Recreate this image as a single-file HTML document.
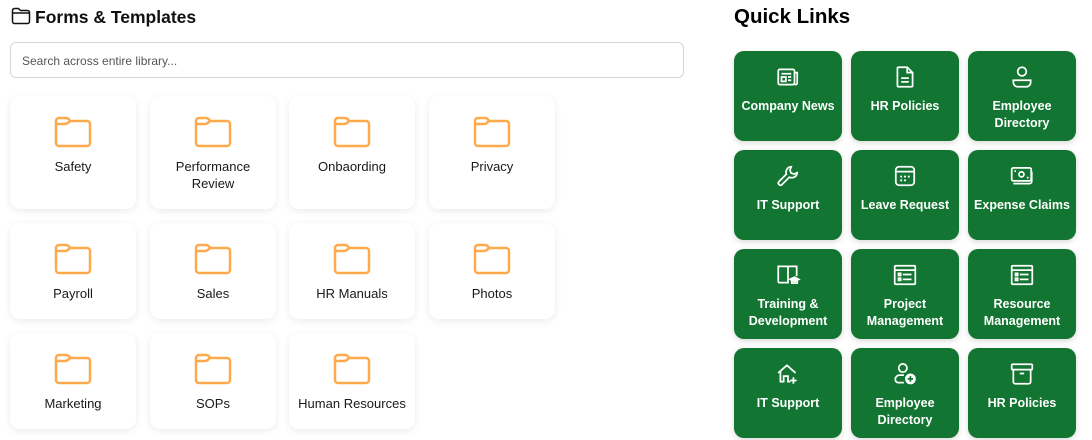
<!DOCTYPE html>
<html><head><style>
*{box-sizing:border-box;margin:0;padding:0}
body{width:1092px;height:440px;background:#fff;font-family:"Liberation Sans",sans-serif;position:relative;overflow:hidden;color:#111}
.t1{position:absolute;left:35px;top:7px;font-size:17.5px;font-weight:bold;color:#111}
.t2{position:absolute;left:734px;top:5px;font-size:20.5px;font-weight:bold;color:#000}
.search{position:absolute;left:10px;top:42px;width:674px;height:36px;border:1px solid #d6d6d6;border-radius:6px;font-size:12px;color:#555;padding:11px 11px}
.card{position:absolute;width:126px;background:#fff;border-radius:10px;box-shadow:0 2px 8px rgba(0,0,0,.08);text-align:center;font-size:13px;color:#1a1a1a;line-height:17px}
.card svg{position:absolute;left:44px;top:20px}
.card .l{position:absolute;left:0;right:0;top:62px}
.q{position:absolute;width:108px;height:90px;background:#127531;border-radius:10px;box-shadow:0 2px 6px rgba(0,0,0,.15);color:#fff;font-weight:bold;font-size:12.5px;text-align:center;line-height:17px}
.q svg{position:absolute;left:41px;top:13px}
.q .l{position:absolute;left:0;right:0;top:47px}
</style></head><body>
<svg style="position:absolute;left:11px;top:7px" width="20" height="18" viewBox="0 0 20 18"><path d="M1.5 3.5a2 2 0 0 1 2-2h4l2 2h7a2 2 0 0 1 2 2v9a2 2 0 0 1-2 2h-13a2 2 0 0 1-2-2z M1.5 6h17" fill="none" stroke="#111" stroke-width="1.5"/></svg>
<div class="t1">Forms &amp; Templates</div>
<div class="t2">Quick Links</div>
<div class="search">Search across entire library...</div>

<div class="card" style="left:10px;top:96px;height:113px"><svg width="38" height="32" viewBox="0 0 38 32"><path d="M2 5a3 3 0 0 1 3-3h7c2 0 3 1 4 3h17a3 3 0 0 1 3 3v19a3 3 0 0 1-3 3H5a3 3 0 0 1-3-3z M2 8h9c2 0 3-1 5-3" fill="none" stroke="#ffa94d" stroke-width="2.5"/></svg><div class="l">Safety</div></div>
<div class="card" style="left:150px;top:96px;height:113px"><svg width="38" height="32" viewBox="0 0 38 32"><path d="M2 5a3 3 0 0 1 3-3h7c2 0 3 1 4 3h17a3 3 0 0 1 3 3v19a3 3 0 0 1-3 3H5a3 3 0 0 1-3-3z M2 8h9c2 0 3-1 5-3" fill="none" stroke="#ffa94d" stroke-width="2.5"/></svg><div class="l">Performance<br>Review</div></div>
<div class="card" style="left:289px;top:96px;height:113px"><svg width="38" height="32" viewBox="0 0 38 32"><path d="M2 5a3 3 0 0 1 3-3h7c2 0 3 1 4 3h17a3 3 0 0 1 3 3v19a3 3 0 0 1-3 3H5a3 3 0 0 1-3-3z M2 8h9c2 0 3-1 5-3" fill="none" stroke="#ffa94d" stroke-width="2.5"/></svg><div class="l">Onbaording</div></div>
<div class="card" style="left:429px;top:96px;height:113px"><svg width="38" height="32" viewBox="0 0 38 32"><path d="M2 5a3 3 0 0 1 3-3h7c2 0 3 1 4 3h17a3 3 0 0 1 3 3v19a3 3 0 0 1-3 3H5a3 3 0 0 1-3-3z M2 8h9c2 0 3-1 5-3" fill="none" stroke="#ffa94d" stroke-width="2.5"/></svg><div class="l">Privacy</div></div>

<div class="card" style="left:10px;top:223px;height:96px"><svg width="38" height="32" viewBox="0 0 38 32"><path d="M2 5a3 3 0 0 1 3-3h7c2 0 3 1 4 3h17a3 3 0 0 1 3 3v19a3 3 0 0 1-3 3H5a3 3 0 0 1-3-3z M2 8h9c2 0 3-1 5-3" fill="none" stroke="#ffa94d" stroke-width="2.5"/></svg><div class="l">Payroll</div></div>
<div class="card" style="left:150px;top:223px;height:96px"><svg width="38" height="32" viewBox="0 0 38 32"><path d="M2 5a3 3 0 0 1 3-3h7c2 0 3 1 4 3h17a3 3 0 0 1 3 3v19a3 3 0 0 1-3 3H5a3 3 0 0 1-3-3z M2 8h9c2 0 3-1 5-3" fill="none" stroke="#ffa94d" stroke-width="2.5"/></svg><div class="l">Sales</div></div>
<div class="card" style="left:289px;top:223px;height:96px"><svg width="38" height="32" viewBox="0 0 38 32"><path d="M2 5a3 3 0 0 1 3-3h7c2 0 3 1 4 3h17a3 3 0 0 1 3 3v19a3 3 0 0 1-3 3H5a3 3 0 0 1-3-3z M2 8h9c2 0 3-1 5-3" fill="none" stroke="#ffa94d" stroke-width="2.5"/></svg><div class="l">HR Manuals</div></div>
<div class="card" style="left:429px;top:223px;height:96px"><svg width="38" height="32" viewBox="0 0 38 32"><path d="M2 5a3 3 0 0 1 3-3h7c2 0 3 1 4 3h17a3 3 0 0 1 3 3v19a3 3 0 0 1-3 3H5a3 3 0 0 1-3-3z M2 8h9c2 0 3-1 5-3" fill="none" stroke="#ffa94d" stroke-width="2.5"/></svg><div class="l">Photos</div></div>

<div class="card" style="left:10px;top:333px;height:96px"><svg width="38" height="32" viewBox="0 0 38 32"><path d="M2 5a3 3 0 0 1 3-3h7c2 0 3 1 4 3h17a3 3 0 0 1 3 3v19a3 3 0 0 1-3 3H5a3 3 0 0 1-3-3z M2 8h9c2 0 3-1 5-3" fill="none" stroke="#ffa94d" stroke-width="2.5"/></svg><div class="l">Marketing</div></div>
<div class="card" style="left:150px;top:333px;height:96px"><svg width="38" height="32" viewBox="0 0 38 32"><path d="M2 5a3 3 0 0 1 3-3h7c2 0 3 1 4 3h17a3 3 0 0 1 3 3v19a3 3 0 0 1-3 3H5a3 3 0 0 1-3-3z M2 8h9c2 0 3-1 5-3" fill="none" stroke="#ffa94d" stroke-width="2.5"/></svg><div class="l">SOPs</div></div>
<div class="card" style="left:289px;top:333px;height:96px"><svg width="38" height="32" viewBox="0 0 38 32"><path d="M2 5a3 3 0 0 1 3-3h7c2 0 3 1 4 3h17a3 3 0 0 1 3 3v19a3 3 0 0 1-3 3H5a3 3 0 0 1-3-3z M2 8h9c2 0 3-1 5-3" fill="none" stroke="#ffa94d" stroke-width="2.5"/></svg><div class="l">Human Resources</div></div>

<div class="q" style="left:734px;top:51px"><svg width="26" height="26" viewBox="0 0 24 24" fill="none" stroke="#fff" stroke-width="1.6"><rect x="3" y="5" width="15" height="14" rx="1.5"/><path d="M18 8h2.5v9.5a1.5 1.5 0 0 1-3 0M6 9h9M6 12h4v4H6zM12 12h3M12 15h3"/></svg><div class="l">Company News</div></div>
<div class="q" style="left:851px;top:51px"><svg width="26" height="26" viewBox="0 0 24 24" fill="none" stroke="#fff" stroke-width="1.6"><path d="M6 3h8l5 5v12a1 1 0 0 1-1 1H6a1 1 0 0 1-1-1V4a1 1 0 0 1 1-1zM14 3v5h5M8.5 13h7M8.5 16.5h7"/></svg><div class="l">HR Policies</div></div>
<div class="q" style="left:968px;top:51px"><svg width="26" height="26" viewBox="0 0 24 24" fill="none" stroke="#fff" stroke-width="1.6"><circle cx="12" cy="7" r="4"/><path d="M4 15h16v2a4 4 0 0 1-4 4H8a4 4 0 0 1-4-4z"/></svg><div class="l">Employee<br>Directory</div></div>

<div class="q" style="left:734px;top:150px"><svg width="26" height="26" viewBox="0 0 24 24" fill="none" stroke="#fff" stroke-width="1.6"><path d="M15 3.5a5 5 0 0 0-4.5 6.8L3.5 17.3a2 2 0 0 0 2.8 2.8l7-7A5 5 0 0 0 20.5 9l-3 1.2-2.7-1 -1-2.7L15 3.5z"/></svg><div class="l">IT Support</div></div>
<div class="q" style="left:851px;top:150px"><svg width="26" height="26" viewBox="0 0 24 24" fill="none" stroke="#fff" stroke-width="1.6"><rect x="3.5" y="3.5" width="17" height="17" rx="3"/><path d="M3.5 8h17"/><g fill="#fff" stroke="none"><circle cx="8.5" cy="12.5" r="1"/><circle cx="12" cy="12.5" r="1"/><circle cx="15.5" cy="12.5" r="1"/><circle cx="8.5" cy="16" r="1"/><circle cx="12" cy="16" r="1"/></g></svg><div class="l">Leave Request</div></div>
<div class="q" style="left:968px;top:150px"><svg width="26" height="26" viewBox="0 0 24 24" fill="none" stroke="#fff" stroke-width="1.6"><rect x="2.5" y="4.5" width="18" height="12" rx="1.5"/><circle cx="11.5" cy="10.5" r="2.3"/><path d="M5 7.5h1.5M16.5 13.5H18M4 19h15a2 2 0 0 0 2-2V8"/></svg><div class="l">Expense Claims</div></div>

<div class="q" style="left:734px;top:249px"><svg width="26" height="26" viewBox="0 0 24 24" fill="none" stroke="#fff" stroke-width="1.6"><path d="M12 19H4a1 1 0 0 1-1-1V4h8a1 1 0 0 1 1 1zM12 5a1 1 0 0 1 1-1h7v9M12 5v14"/><path d="M14 16l4-2 4 2-4 2z" fill="#fff"/><path d="M15.5 17v2.5h5V17"/></svg><div class="l">Training &amp;<br>Development</div></div>
<div class="q" style="left:851px;top:249px"><svg width="26" height="26" viewBox="0 0 24 24" fill="none" stroke="#fff" stroke-width="1.6"><rect x="2.5" y="3.5" width="19" height="17" rx="1"/><path d="M2.5 7.5h19M6 10.5h2v2H6zM6 15h2v2H6zM10 11.5h8M10 16h8"/></svg><div class="l">Project<br>Management</div></div>
<div class="q" style="left:968px;top:249px"><svg width="26" height="26" viewBox="0 0 24 24" fill="none" stroke="#fff" stroke-width="1.6"><rect x="2.5" y="3.5" width="19" height="17" rx="1"/><path d="M2.5 7.5h19M6 10.5h2v2H6zM6 15h2v2H6zM10 11.5h8M10 16h8"/></svg><div class="l">Resource<br>Management</div></div>

<div class="q" style="left:734px;top:348px"><svg width="26" height="26" viewBox="0 0 24 24" fill="none" stroke="#fff" stroke-width="1.6"><path d="M3 11l8-7 8 7M5 9.5V19h3v-5h4v5h2M17 15v6M14 18h6"/></svg><div class="l">IT Support</div></div>
<div class="q" style="left:851px;top:348px"><svg width="26" height="26" viewBox="0 0 24 24" fill="none" stroke="#fff" stroke-width="1.6"><circle cx="10" cy="6.5" r="3.8"/><path d="M11 20H6a3 3 0 0 1-3-3 4 4 0 0 1 4-4h4"/><circle cx="17" cy="16.5" r="5" fill="#fff" stroke="none"/><path d="M17 14v5M14.5 16.5h5" stroke="#127531"/></svg><div class="l">Employee<br>Directory</div></div>
<div class="q" style="left:968px;top:348px"><svg width="26" height="26" viewBox="0 0 24 24" fill="none" stroke="#fff" stroke-width="1.6"><rect x="2.5" y="3" width="19" height="5" rx="1"/><path d="M4 8v11a2 2 0 0 0 2 2h12a2 2 0 0 0 2-2V8M10 11.5h4"/></svg><div class="l">HR Policies</div></div>
</body></html>
